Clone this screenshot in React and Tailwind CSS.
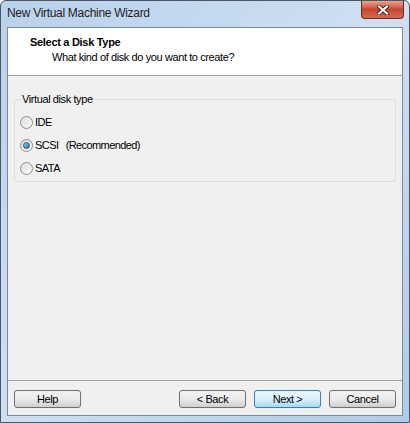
import React from 'react';

const font = { fontFamily: '"Liberation Sans", Arial, sans-serif' };

function Radio({ checked }) {
  return (
    <span className="relative flex h-[13px] w-[13px] shrink-0 items-center justify-center rounded-full border border-[#8f8f8f] bg-gradient-to-br from-[#dcdcdc] to-[#fbfbfb]">
      {checked && (
        <span className="h-[7px] w-[7px] rounded-full border border-[#1c5180] bg-gradient-to-br from-[#9fd6f7] to-[#176aa8]" />
      )}
    </span>
  );
}

function Option({ label, hint, checked }) {
  return (
    <div className="flex h-[23px] items-center gap-[2px]">
      <Radio checked={checked} />
      <span className="text-[11px] tracking-[-0.5px] text-black">{label}</span>
      {hint && <span className="ml-[5px] text-[11px] tracking-[-0.6px] text-black">{hint}</span>}
    </div>
  );
}

function WinButton({ children, primary }) {
  return (
    <button
      className={
        primary
          ? 'flex h-[18px] w-[67px] items-center justify-center rounded-[3px] border border-[#3c7fb1] bg-gradient-to-b from-[#eaf6fd] via-[#d9f0fc] to-[#a7d9f5] text-[11px] tracking-[-0.4px] text-black'
          : 'flex h-[18px] w-[67px] items-center justify-center rounded-[3px] border border-[#707070] bg-gradient-to-b from-[#f2f2f2] via-[#ebebeb] to-[#cfcfcf] text-[11px] tracking-[-0.4px] text-black'
      }
    >
      {children}
    </button>
  );
}

function CloseGlyph() {
  return (
    <svg width="12" height="10" viewBox="0 0 12 10">
      <path d="M2 1.5 L10 8.5 M10 1.5 L2 8.5" stroke="#4a2a24" strokeWidth="4" strokeLinecap="square" />
      <path d="M2 1.5 L10 8.5 M10 1.5 L2 8.5" stroke="#ffffff" strokeWidth="2" strokeLinecap="square" />
    </svg>
  );
}

export default function App() {
  return (
    <div style={font} className="h-[423px] w-[410px] overflow-hidden bg-white">
      <div className="flex h-full w-full flex-col rounded-t-[6px] border border-[#4b5563] bg-gradient-to-br from-[#b9d1ea] via-[#cfe0f2] to-[#aecbe8]">
        <div className="flex h-[26px] shrink-0 items-start justify-between">
          <span className="pl-[6px] pt-[4px] text-[12px] leading-[16px] tracking-[-0.3px] text-[#1e1e1e]">New Virtual Machine Wizard</span>
          <div className="mr-[5px] flex h-[18px] w-[43px] items-center justify-center rounded-b-[4px] border border-t-0 border-[#6d2b22] bg-gradient-to-b from-[#e8a493] via-[#c7452f] to-[#d36a4f]">
            <CloseGlyph />
          </div>
        </div>

        <div className="mx-[6px] mb-[6px] flex flex-1 flex-col border border-[#7a8a9e] bg-[#f0f0f0]">
          <div className="flex h-[48px] shrink-0 flex-col border-b border-[#a0a0a0] bg-white pl-[22px] pt-[7px]">
            <span className="text-[11px] font-bold leading-[15px] tracking-[-0.3px] text-black">Select a Disk Type</span>
            <span className="pl-[22px] text-[11px] leading-[15px] tracking-[-0.4px] text-black">What kind of disk do you want to create?</span>
          </div>

          <div className="flex-1 px-[6px] pt-[15px]">
            <fieldset className="rounded-[3px] border border-[#d5dfe5] px-[5px] pb-[1px] pt-[3px]">
              <legend className="ml-[1px] px-[1px] text-[11px] tracking-[-0.4px] text-black">Virtual disk type</legend>
              <Option label="IDE" />
              <Option label="SCSI" hint="(Recommended)" checked />
              <Option label="SATA" />
            </fieldset>
          </div>

          <div className="flex shrink-0 items-center border-t border-[#a0a0a0] px-[6px] pb-[7px] pt-[9px]">
            <WinButton>Help</WinButton>
            <div className="ml-auto flex gap-[8px]">
              <WinButton>&lt; Back</WinButton>
              <WinButton primary>Next &gt;</WinButton>
              <WinButton>Cancel</WinButton>
            </div>
          </div>
        </div>
      </div>
    </div>
  );
}
